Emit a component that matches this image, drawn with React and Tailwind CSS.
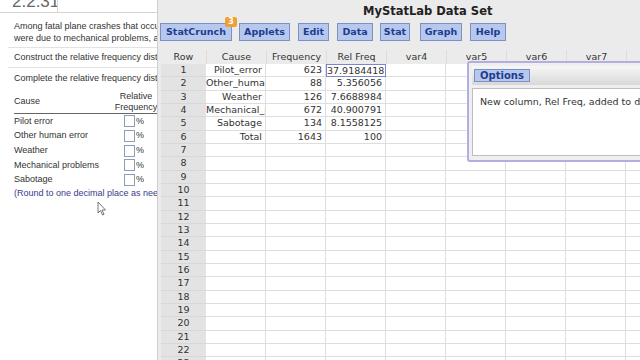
const causes = ["Pilot error", "Other human error", "Weather", "Mechanical problems", "Sabotage"];

const data = [
  ["Pilot_error", "623", "37.9184418"],
  ["Other_human_error", "88", "5.356056"],
  ["Weather", "126", "7.6688984"],
  ["Mechanical_problems", "672", "40.900791"],
  ["Sabotage", "134", "8.1558125"],
  ["Total", "1643", "100"],
];

const columns = ["Cause", "Frequency", "Rel Freq", "var4", "var5", "var6", "var7", "var8"];

function MenuButton({ label, className }) {
  return (
    <div
      className={
        "flex h-[18px] shrink-0 items-center justify-center border border-[#7d90c4] bg-[#b7c8ee] text-[9.5px] font-bold text-[#1e3c8e] " +
        className
      }
    >
      {label}
    </div>
  );
}

function QuestionPanel() {
  return (
    <div className="relative h-full w-[157px] shrink-0 overflow-hidden bg-white font-['Liberation_Sans',Arial,sans-serif] text-[9px] text-[#333]">
      <div className="flex h-[13px] border-b border-[#d6d6d6]">
        <div className="h-[13px] w-[58px] overflow-hidden border-r border-[#d6d6d6] pl-[12px]">
          <div className="mt-[-8px] whitespace-nowrap text-[17px] leading-[20px] text-[#666]">2.2.31</div>
        </div>
      </div>
      <div className="px-[14px]">
        <div className="mt-[7px] whitespace-nowrap leading-[12px]">Among fatal plane crashes that occurred during the past</div>
        <div className="whitespace-nowrap leading-[12px]">were due to mechanical problems, and</div>
      </div>
      <div className="mt-[3px] ml-[8px] border-t border-[#e2e2e2]" />
      <div className="mt-[3px] whitespace-nowrap px-[14px] leading-[12px]">Construct the relative frequency distribution</div>
      <div className="mt-[4px] ml-[8px] border-t border-[#e2e2e2]" />
      <div className="mt-[4px] whitespace-nowrap px-[14px] leading-[12px]">Complete the relative frequency distribution</div>
      <div className="ml-[14px] mt-[7px] w-[150px]">
        <div className="flex items-center border-b border-[#666]">
          <div className="w-[99px]">Cause</div>
          <div className="flex w-[46px] flex-col items-center leading-[11px]">
            <span>Relative</span>
            <span>Frequency</span>
          </div>
        </div>
        {causes.map((name) => (
          <div key={name} className="flex h-[14.7px] items-center">
            <div className="w-[110px] whitespace-nowrap">{name}</div>
            <div className="h-[12px] w-[11px] border border-[#8d9db6] bg-white" />
            <span className="ml-[1px]">%</span>
          </div>
        ))}
        <div className="whitespace-nowrap leading-[12px] text-[#3a3a8c]">(Round to one decimal place as needed.)</div>
      </div>
      <svg className="absolute left-[97px] top-[201px]" width="10" height="15" viewBox="0 0 10 15">
        <path d="M1 1 L1 12 L3.5 9.5 L5.5 14 L7 13.3 L5 9 L8.5 9 Z" fill="#fff" stroke="#555" strokeWidth="0.8" />
      </svg>
    </div>
  );
}

function Grid() {
  const rows = Array.from({ length: 23 }, (_, i) => i + 1);
  return (
    <div className="ml-[3px] mt-[9px] text-[9.5px] text-[#333]">
      <div className="flex h-[14px] items-center">
        <div className="w-[45px] shrink-0 text-center">Row</div>
        {columns.map((c) => (
          <div key={c} className="w-[60px] shrink-0 border-l border-[#dcdcdc] text-center">
            {c}
          </div>
        ))}
      </div>
      {rows.map((r) => {
        const row = data[r - 1];
        return (
          <div key={r} className="flex h-[13.33px]">
            <div className="flex w-[45px] shrink-0 items-center justify-center border-b border-[#d7d7d7] bg-[#e3e3e3]">
              {r}
            </div>
            {columns.map((c, ci) => {
              const val = row && ci < 3 ? row[ci] : "";
              const selected = r === 1 && ci === 2;
              return (
                <div
                  key={c}
                  className={
                    selected
                      ? "w-[60px] shrink-0 overflow-hidden whitespace-nowrap border border-[#7c86cc] bg-white pr-[1px] text-right leading-[11px]"
                      : "w-[60px] shrink-0 overflow-hidden whitespace-nowrap border-b border-r border-[#dedede] bg-white pr-[3px] text-right leading-[12px]"
                  }
                >
                  {val}
                </div>
              );
            })}
          </div>
        );
      })}
    </div>
  );
}

export default function App() {
  return (
    <div className="flex h-[360px] w-[640px] overflow-hidden bg-white">
      <QuestionPanel />
      <div className="relative h-full flex-1 overflow-hidden border-l border-[#cfcfcf] bg-[#ebebeb] font-['DejaVu_Sans',Verdana,sans-serif]">
        <div className="ml-[205px] mt-[3px] whitespace-nowrap text-[11.5px] font-bold leading-[16px] text-[#222]">
          MyStatLab Data Set
        </div>
        <div className="ml-[2px] mt-[4px] flex items-center">
          <div className="relative">
            <MenuButton label="StatCrunch" className="w-[72px]" />
            <div className="absolute right-[-5px] top-[-6px] flex h-[10px] w-[12px] items-center justify-center rounded-[2px] bg-[#f0a030] text-[8px] font-bold leading-none text-white">
              3
            </div>
          </div>
          <MenuButton label="Applets" className="ml-[7px] w-[51px]" />
          <MenuButton label="Edit" className="ml-[8px] w-[31px]" />
          <MenuButton label="Data" className="ml-[8px] w-[36px]" />
          <MenuButton label="Stat" className="ml-[7px] w-[30px]" />
          <MenuButton label="Graph" className="ml-[10px] w-[42px]" />
          <MenuButton label="Help" className="ml-[8px] w-[36px]" />
        </div>
        <Grid />
        <div className="absolute left-[309px] top-[61px] h-[101px] w-[200px] rounded-[3px] border-2 border-[#b2aee0] bg-[#efefef] p-[3px]">
          <div className="flex h-[19px] items-center bg-gradient-to-b from-[#f7f7f7] to-[#d8d8d8] px-[2px]">
            <div className="flex h-[13px] w-[56px] items-center justify-center border border-[#7d90c4] bg-[#b7c8ee] text-[10px] font-bold text-[#1e3c8e]">
              Options
            </div>
          </div>
          <div className="mt-[3px] h-[68px] whitespace-nowrap border border-[#bdbdbd] bg-white pl-[7px] pt-[6px] text-[9.5px] text-[#333]">
            New column, Rel Freq, added to data table.
          </div>
        </div>
      </div>
    </div>
  );
}
